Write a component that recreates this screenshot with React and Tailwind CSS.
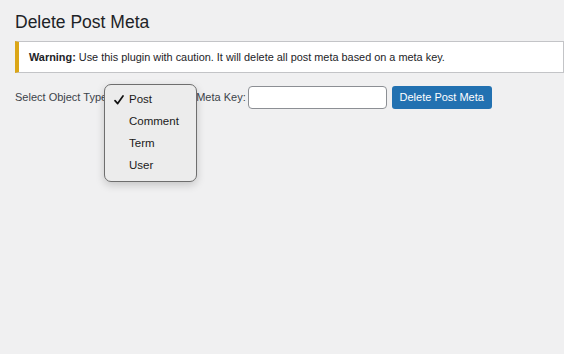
export default function App() {
  const font = { fontFamily: '"Liberation Sans", Arial, sans-serif' };
  return (
    <div className="relative min-h-[354px] w-full bg-[#f0f0f1] text-[#1d2327] overflow-hidden" style={font}>
      <div className="pl-[15px] pt-[11px]">
        <h1 className="text-[17.5px] leading-[22.75px] font-normal text-[#1d2327]">Delete Post Meta</h1>
      </div>
      <div className="mt-[7px] ml-[15px] border border-[#c3c4c7] border-l-[4px] border-l-[#dba617] bg-white px-[10px] py-[7px] text-[10.9px] leading-[16px] text-[#1d2327] whitespace-nowrap">
        <strong className="font-bold">Warning:</strong> Use this plugin with caution. It will delete all post meta based on a meta key.
      </div>
      <div className="mt-[13px] pl-[15px] flex items-center h-[23px] text-[11px] text-[#3c434a]">
        <span className="whitespace-nowrap">Select Object Type:</span>
        <div className="ml-[4px] w-[72px] h-[23px] border border-[#8c8f94] rounded-[3px] bg-white shrink-0"></div>
        <span className="ml-[10px] whitespace-nowrap">Meta Key:</span>
        <div className="ml-[2px] w-[139px] h-[23px] border border-[#8c8f94] rounded-[4px] bg-white shrink-0"></div>
        <button className="ml-[5px] w-[100px] h-[23px] rounded-[3px] bg-[#2271b1] text-white text-[11px] shrink-0">Delete Post Meta</button>
      </div>
      <div className="absolute left-[104px] top-[84px] w-[93px] h-[98px] rounded-[7px] border border-[#6e6e6e] bg-[#ececec] shadow-[0_3px_8px_rgba(0,0,0,0.18)] pt-[4px] text-[11.5px] text-[#1a1a1a]">
        {['Post', 'Comment', 'Term', 'User'].map((t, i) => (
          <div key={t} className="relative h-[22px] flex items-center pl-[24px]">
            {i === 0 && (
              <svg className="absolute left-[9px] top-[6px]" width="10" height="10" viewBox="0 0 10 10">
                <path d="M1 5.6 L3.7 8.6 L9 1" fill="none" stroke="#111" strokeWidth="1.7" strokeLinecap="round" strokeLinejoin="round" />
              </svg>
            )}
            <span>{t}</span>
          </div>
        ))}
      </div>
    </div>
  );
}
